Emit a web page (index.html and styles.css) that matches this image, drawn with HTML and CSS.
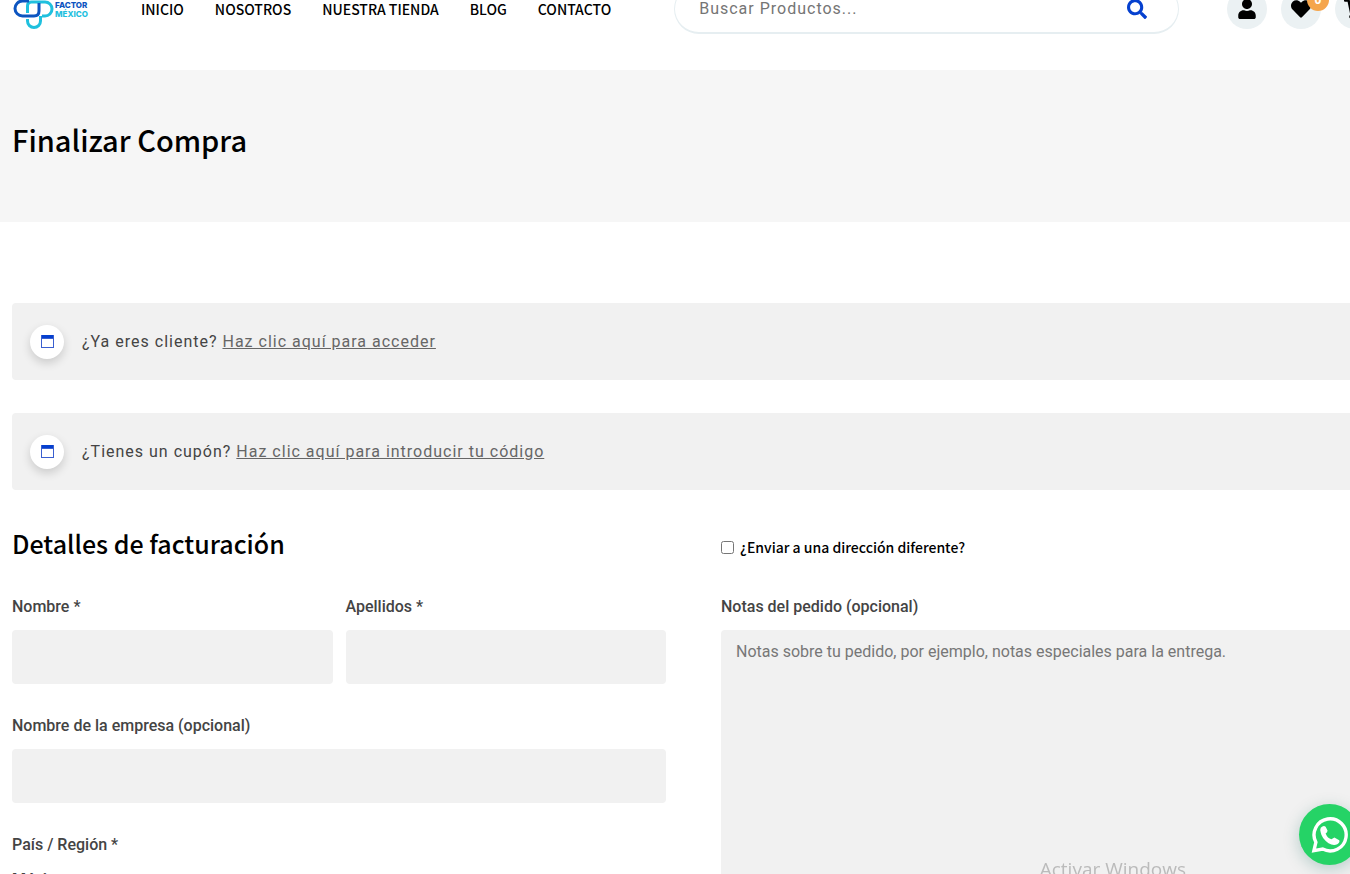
FILE: index.html
```html
<!DOCTYPE html>
<html lang="es">
<head>
<meta charset="utf-8">
<title>Finalizar Compra</title>
<link rel="stylesheet" href="styles.css">
</head>
<body>
<header class="site-header">
  <a class="logo" href="#" aria-label="Factor México">
    <svg width="80" height="50" viewBox="0 0 80 50">
      <g fill="none" stroke-width="3">
        <path stroke="#1fc0de" d="M15.500 35v2a6.500 6.500 0 0 0 13 0V32"/>
        <path stroke="#1fc0de" d="M15.500 29V22q0-4 4-4H33a7 7 0 0 1 0 14H30"/>
        <path stroke="#0d55c0" d="M17 17H10.500a7.500 7.500 0 0 0 0 15H22q5 0 5-5V19"/>
      </g>
      <text class="logo-top" x="43" y="24">FACTOR</text>
      <text class="logo-bottom" x="43" y="33">MÉXICO</text>
    </svg>
  </a>
  <nav class="menu">
    <a href="#">INICIO</a>
    <a href="#">NOSOTROS</a>
    <a href="#">NUESTRA TIENDA</a>
    <a href="#">BLOG</a>
    <a href="#">CONTACTO</a>
  </nav>
  <form class="search">
    <input type="search" aria-label="Buscar productos" placeholder="Buscar Productos...">
    <button type="button" aria-label="Buscar">
      <svg width="20" height="20" viewBox="0 0 512 512"><path fill="#0540cf" d="M505 442.700L405.300 343c-4.500-4.500-10.600-7-17-7H372c27.600-35.300 44-79.700 44-128C416 93.100 322.900 0 208 0S0 93.100 0 208s93.100 208 208 208c48.300 0 92.700-16.400 128-44v16.300c0 6.400 2.500 12.500 7 17l99.700 99.700c9.400 9.400 24.600 9.400 33.900 0l28.300-28.300c9.400-9.400 9.400-24.600.1-34zM208 336c-70.700 0-128-57.200-128-128 0-70.700 57.200-128 128-128 70.700 0 128 57.200 128 128 0 70.700-57.200 128-128 128z"/></svg>
    </button>
  </form>
  <div class="actions">
    <a class="round" href="#" aria-label="Mi cuenta">
      <svg width="18" height="20" viewBox="0 0 448 512"><path d="M224 256c70.700 0 128-57.300 128-128S294.700 0 224 0 96 57.300 96 128s57.300 128 128 128zm89.600 32h-16.700c-22.200 10.200-46.900 16-72.900 16s-50.600-5.800-72.900-16h-16.700C60.200 288 0 348.200 0 422.400V464c0 26.500 21.500 48 48 48h352c26.500 0 48-21.500 48-48v-41.600c0-74.200-60.200-134.400-134.400-134.400z"/></svg>
    </a>
    <a class="round" href="#" aria-label="Favoritos">
      <svg width="20" height="20" viewBox="0 0 512 512"><path d="M462.300 62.600C407.500 15.900 326 24.300 275.700 76.200L256 96.500l-19.700-20.300C186.100 24.300 104.500 15.900 49.700 62.600c-62.800 53.600-66.100 149.800-9.900 207.900l193.500 199.800c12.500 12.900 32.800 12.900 45.300 0l193.500-199.800c56.300-58.100 53-154.300-9.800-207.900z"/></svg>
      <span class="count">0</span>
    </a>
    <a class="round" href="#" aria-label="Carrito">
      <svg width="22" height="20" viewBox="0 0 576 512"><path d="M528.100 301.300l47.300-208C578.800 78.300 567.400 64 552 64H159.200l-9.200-44.800C147.800 8 137.900 0 126.500 0H24C10.700 0 0 10.700 0 24v16c0 13.300 10.700 24 24 24h69.900l70.200 343.400C147.300 417.100 136 435.200 136 456c0 30.900 25.100 56 56 56s56-25.100 56-56c0-15.700-6.400-29.800-16.800-40h209.600C430.400 426.200 424 440.300 424 456c0 30.900 25.100 56 56 56s56-25.100 56-56c0-22.200-12.900-41.300-31.600-50.400l5.500-24.300c3.400-15-8-29.300-23.400-29.300H218.100l-6.500-32h293.100c11.200 0 20.900-7.800 23.400-18.700z"/></svg>
    </a>
  </div>
</header>
<section class="banner"><h1>Finalizar Compra</h1></section>
<main class="content">
  <div class="notice">
    <span class="badge"><svg width="13" height="13" viewBox="0 0 13 13"><path fill="#3a5fd0" fill-rule="evenodd" d="M0 0h13v13H0zM1 4v8h11V4z"/><path fill="#0540cf" d="M1 0h11v3H1z"/></svg></span>
    <p>¿Ya eres cliente? <a href="#">Haz clic aquí para acceder</a></p>
  </div>
  <div class="notice">
    <span class="badge"><svg width="13" height="13" viewBox="0 0 13 13"><path fill="#3a5fd0" fill-rule="evenodd" d="M0 0h13v13H0zM1 4v8h11V4z"/><path fill="#0540cf" d="M1 0h11v3H1z"/></svg></span>
    <p>¿Tienes un cupón? <a href="#">Haz clic aquí para introducir tu código</a></p>
  </div>
  <form class="checkout">
    <div class="billing">
      <h2>Detalles de facturación</h2>
      <div class="pair">
        <div class="field"><label for="nombre">Nombre *</label><input id="nombre" type="text"></div>
        <div class="field"><label for="apellidos">Apellidos *</label><input id="apellidos" type="text"></div>
      </div>
      <div class="field"><label for="empresa">Nombre de la empresa (opcional)</label><input id="empresa" type="text"></div>
      <div class="country"><span>País / Región *</span><strong>México</strong></div>
    </div>
    <div class="extra">
      <div class="ship"><input id="envio" type="checkbox"><label for="envio">¿Enviar a una dirección diferente?</label></div>
      <div class="field notes"><label for="notas">Notas del pedido (opcional)</label><textarea id="notas" placeholder="Notas sobre tu pedido, por ejemplo, notas especiales para la entrega."></textarea></div>
    </div>
  </form>
</main>
<div class="watermark">Activar Windows</div>
<a class="whatsapp" href="#" aria-label="WhatsApp">
  <svg width="37" height="37" viewBox="0 0 38 38"><path fill="none" stroke="#fff" stroke-width="3.500" d="M3 35.500L5 27A16.500 16.500 0 1 1 12 34z"/><path fill="#fff" d="M10 12q3-3 5-1l2 4q0 2-2 3 2 5 6 6l3-2 5 3q1 2-2 4-4 2-9-1-7-5-8-11-1-3 0-5z"/></svg>
</a>
</body>
</html>
```
FILE: styles.css
```css
* { box-sizing: border-box; }
body {
  margin: 0;
  height: 100vh;
  overflow: hidden;
  background: #fff;
  color: #444;
  font: 16px/24px Roboto, sans-serif;
}
h1, h2, p { margin: 0; }
h1, h2, .menu, .ship { font-family: "Noto Sans CJK SC", sans-serif; font-weight: 500; color: #000; }

.site-header {
  display: flex;
  align-items: center;
  margin: -16px -25px 0 0;
  padding: 0 0 36px 12px;
}
.logo { display: flex; width: 80px; }
.logo text { font: 800 8px Inter, sans-serif; }
.logo-top { fill: #0d55c0; }
.logo-bottom { fill: #1fc0de; }
.menu { display: flex; gap: 31px; margin-left: 49px; font-size: 14px; white-space: nowrap; }
.menu a { color: inherit; text-decoration: none; }
.search {
  display: flex;
  flex: 1;
  align-items: center;
  height: 50px;
  margin-left: 63px;
  padding: 0 31px 0 24px;
  border: 1px solid #e6eef1;
  border-bottom-width: 2px;
  border-radius: 25px;
}
.search input {
  flex: 1;
  min-width: 0;
  padding: 0;
  border: 0;
  outline: 0;
  background: none;
  font: 16px/24px Roboto, sans-serif;
  letter-spacing: 1px;
}
.search button { display: flex; padding: 0; border: 0; background: none; }
.actions { display: flex; gap: 14px; margin-left: 48px; }
.round {
  position: relative;
  display: flex;
  align-items: center;
  justify-content: center;
  width: 40px;
  height: 40px;
  border-radius: 50%;
  background: #ebf1f3;
}
.count {
  position: absolute;
  top: 0;
  right: -8px;
  width: 22px;
  height: 22px;
  border-radius: 50%;
  background: #f5a54c;
  color: #fff;
  font: 700 12px/22px "Open Sans", sans-serif;
  text-align: center;
}

.banner { padding: 45px 12px 59px; background: #f6f6f6; }
h1 { font-size: 29px; line-height: 48px; }

.content { padding: 81px 0 0 12px; }
.notice {
  display: flex;
  align-items: center;
  gap: 18px;
  height: 77px;
  margin-bottom: 33px;
  padding-left: 18px;
  border-radius: 4px 0 0 4px;
  background: #f1f1f1;
  letter-spacing: 1px;
}
.notice a { color: #666; }
.badge {
  display: flex;
  align-items: center;
  justify-content: center;
  width: 34px;
  height: 34px;
  border-radius: 50%;
  background: #fff;
  box-shadow: 0 4px 10px rgba(0, 0, 0, .16);
}

.checkout { display: grid; grid-template-columns: 654fr 629fr; gap: 55px; }
h2 { height: 40px; margin-bottom: 32px; font-size: 25px; line-height: 40px; }
.pair { display: grid; grid-template-columns: 1fr 1fr; gap: 13px; }
.field { display: flex; flex-direction: column; gap: 11px; margin-bottom: 30px; }
.field label, .country { font-weight: 500; }
.field input, .field textarea {
  width: 100%;
  height: 54px;
  padding: 10px 15px;
  border: 0;
  border-radius: 4px;
  background: #f1f1f1;
  font: 16px/24px Roboto, sans-serif;
}
.field textarea { height: 320px; border-radius: 4px 0 0 4px; resize: none; }
.field textarea::placeholder { color: #777; }
.country { display: flex; flex-direction: column; gap: 11px; }
.country strong { font-weight: 700; }
.ship { display: flex; align-items: center; gap: 6px; height: 48px; margin-bottom: 24px; font-size: 14px; }
.ship input { width: 13px; height: 13px; margin: 0; }

.watermark {
  position: fixed;
  right: 164px;
  bottom: -9px;
  color: #bbb;
  font: 19px/28px "Open Sans", sans-serif;
}
.whatsapp {
  position: fixed;
  right: -10px;
  bottom: 9px;
  display: flex;
  align-items: center;
  justify-content: center;
  width: 61px;
  height: 61px;
  border-radius: 50%;
  background: #25d366;
  box-shadow: 0 4px 16px rgba(7, 94, 84, .25);
}
```
